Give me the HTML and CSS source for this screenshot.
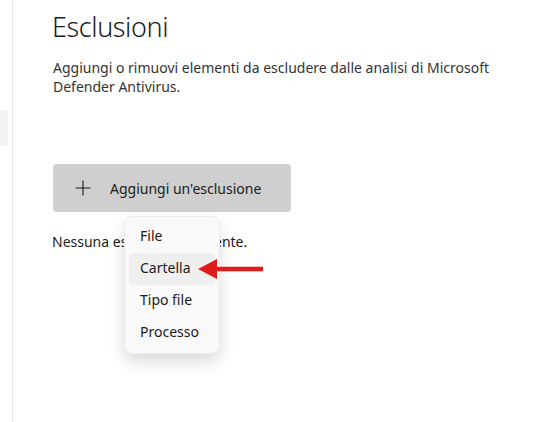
FILE: index.html
```html
<!DOCTYPE html>
<html lang="it">
<head>
<meta charset="utf-8">
<title>Esclusioni</title>
<link rel="stylesheet" href="styles.css">
</head>
<body>
<div class="page">
  <aside class="nav">
    <div class="nav-item"></div>
  </aside>
  <main class="content">
    <h1 class="title">Esclusioni</h1>
    <p class="desc">Aggiungi o rimuovi elementi da escludere dalle analisi di Microsoft Defender Antivirus.</p>
    <div class="action">
      <button class="add-btn" type="button">
        <svg class="plus" width="16" height="16" viewBox="0 0 16 16"><path d="M8 0.5V15.5M0.5 8H15.5" stroke="#1b1b1b" stroke-width="1.1" fill="none"/></svg>
        <span>Aggiungi un'esclusione</span>
      </button>
      <div class="menu">
        <div class="menu-item">File</div>
        <div class="menu-item active">Cartella</div>
        <div class="menu-item">Tipo file</div>
        <div class="menu-item">Processo</div>
      </div>
      <svg class="arrow" width="68" height="26" viewBox="0 0 68 26"><path d="M1 13L20 3V10.8H66V15.2H20V23Z" fill="#e01b1b"/></svg>
    </div>
    <p class="empty">Nessuna esclusione presente.</p>
  </main>
</div>
</body>
</html>
```
FILE: styles.css
```css
html, body {
  margin: 0;
  padding: 0;
  background: #ffffff;
}
body {
  font-family: "Segoe UI", "Noto Sans", "Open Sans", sans-serif;
  color: #1b1b1b;
}
.page {
  display: flex;
  height: 422px;
  overflow: hidden;
}
.nav {
  width: 13px;
  flex: none;
  border-right: 1px solid #e6e6e6;
  padding-top: 110px;
  box-sizing: border-box;
}
.nav-item {
  width: 8px;
  height: 36px;
  background: #f3f3f3;
  border-radius: 0 3px 3px 0;
}
.content {
  flex: 1;
  padding: 8px 0 0 40px;
}
.title {
  margin: 0 0 0 -1px;
  font-size: 27px;
  font-weight: 300;
  letter-spacing: -0.4px;
  line-height: 38px;
  color: #1b1b1b;
}
.desc {
  margin: 12px 0 0;
  width: 460px;
  font-size: 14px;
  line-height: 19px;
  color: #333333;
}
.action {
  position: relative;
  margin-top: 68px;
  width: 238px;
}
.add-btn {
  display: flex;
  align-items: center;
  gap: 19px;
  width: 238px;
  height: 48px;
  padding: 0 0 0 22px;
  border: none;
  border-radius: 4px;
  background: #cfcfcf;
  font-family: inherit;
  font-size: 14px;
  color: #1b1b1b;
  cursor: default;
}
.plus {
  flex: none;
}
.menu {
  position: absolute;
  left: 71px;
  top: 52px;
  width: 96px;
  padding: 4px 0;
  box-sizing: border-box;
  background: #f9f9f9;
  border: 1px solid #ececec;
  border-radius: 8px;
  box-shadow: 0 8px 16px rgba(0, 0, 0, 0.14);
  z-index: 2;
}
.menu-item {
  margin: 0 4px;
  height: 32px;
  line-height: 30px;
  padding-left: 11px;
  font-size: 14px;
  color: #1b1b1b;
  border-radius: 4px;
}
.menu-item.active {
  background: #efefef;
}
.arrow {
  position: absolute;
  left: 144px;
  top: 92px;
  z-index: 3;
}
.empty {
  margin: 20px 0 0 -1px;
  font-size: 14px;
  line-height: 19px;
  color: #1b1b1b;
}
```
